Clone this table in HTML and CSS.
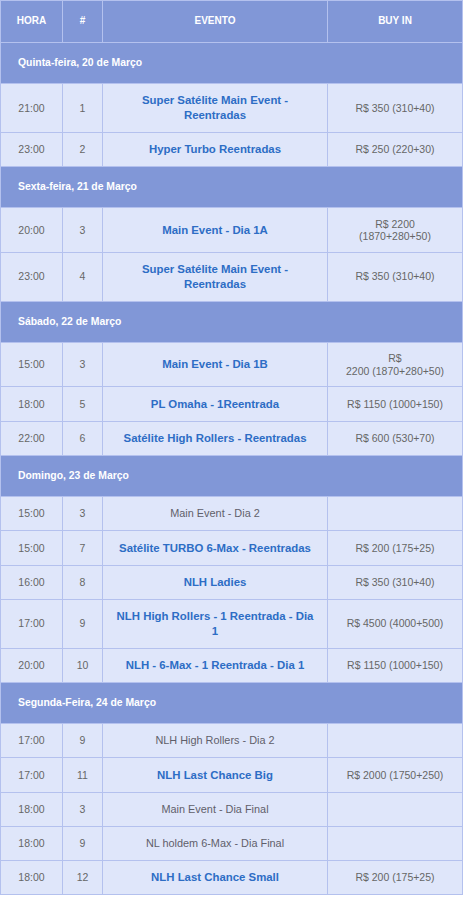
FILE: index.html
```html
<!DOCTYPE html>
<html lang="pt-BR">
<head>
<meta charset="utf-8">
<title>Programação</title>
<link rel="stylesheet" href="styles.css">
</head>
<body>
<table class="schedule">
  <colgroup>
    <col class="c-time"><col class="c-num"><col class="c-event"><col class="c-buy">
  </colgroup>
  <thead>
    <tr class="head"><th>HORA</th><th>#</th><th>EVENTO</th><th>BUY IN</th></tr>
  </thead>
  <tbody>
    <tr class="day"><td colspan="4">Quinta-feira, 20 de Março</td></tr>
    <tr><td>21:00</td><td>1</td><td class="ev">Super Satélite Main Event - Reentradas</td><td>R$ 350 (310+40)</td></tr>
    <tr><td>23:00</td><td>2</td><td class="ev">Hyper Turbo Reentradas</td><td>R$ 250 (220+30)</td></tr>

    <tr class="day"><td colspan="4">Sexta-feira, 21 de Março</td></tr>
    <tr><td>20:00</td><td>3</td><td class="ev">Main Event - Dia 1A</td><td class="two">R$ 2200<br>(1870+280+50)</td></tr>
    <tr><td>23:00</td><td>4</td><td class="ev">Super Satélite Main Event - Reentradas</td><td>R$ 350 (310+40)</td></tr>

    <tr class="day"><td colspan="4">Sábado, 22 de Março</td></tr>
    <tr><td>15:00</td><td>3</td><td class="ev">Main Event - Dia 1B</td><td class="two">R$<br>2200 (1870+280+50)</td></tr>
    <tr><td>18:00</td><td>5</td><td class="ev">PL Omaha - 1Reentrada</td><td>R$ 1150 (1000+150)</td></tr>
    <tr><td>22:00</td><td>6</td><td class="ev">Satélite High Rollers - Reentradas</td><td>R$ 600 (530+70)</td></tr>

    <tr class="day"><td colspan="4">Domingo, 23 de Março</td></tr>
    <tr><td>15:00</td><td>3</td><td class="ev plain">Main Event - Dia 2</td><td></td></tr>
    <tr><td>15:00</td><td>7</td><td class="ev">Satélite TURBO 6-Max - Reentradas</td><td>R$ 200 (175+25)</td></tr>
    <tr><td>16:00</td><td>8</td><td class="ev">NLH Ladies</td><td>R$ 350 (310+40)</td></tr>
    <tr><td>17:00</td><td>9</td><td class="ev">NLH High Rollers - 1 Reentrada - Dia 1</td><td>R$ 4500 (4000+500)</td></tr>
    <tr><td>20:00</td><td>10</td><td class="ev">NLH - 6-Max - 1 Reentrada - Dia 1</td><td>R$ 1150 (1000+150)</td></tr>

    <tr class="day"><td colspan="4">Segunda-Feira, 24 de Março</td></tr>
    <tr><td>17:00</td><td>9</td><td class="ev plain">NLH High Rollers - Dia 2</td><td></td></tr>
    <tr><td>17:00</td><td>11</td><td class="ev">NLH Last Chance Big</td><td>R$ 2000 (1750+250)</td></tr>
    <tr><td>18:00</td><td>3</td><td class="ev plain">Main Event - Dia Final</td><td></td></tr>
    <tr><td>18:00</td><td>9</td><td class="ev plain">NL holdem 6-Max - Dia Final</td><td></td></tr>
    <tr><td>18:00</td><td>12</td><td class="ev">NLH Last Chance Small</td><td>R$ 200 (175+25)</td></tr>
  </tbody>
</table>
</body>
</html>
```

FILE: styles.css
```css
html, body {
  margin: 0;
  padding: 0;
  background: #ffffff;
}

.schedule {
  width: 462px;
  border-collapse: collapse;
  table-layout: fixed;
  font-family: "Liberation Sans", Arial, sans-serif;
  font-size: 10.5px;
  color: #666666;
  background: #dfe6fa;
}

.c-time { width: 62px; }
.c-num { width: 40px; }
.c-event { width: 225px; }
.c-buy { width: 135px; }

.schedule th,
.schedule td {
  border: 1px solid #b4c1ee;
  text-align: center;
  vertical-align: middle;
  padding: 9.35px 8px;
  line-height: 14.6px;
}

.head th {
  background: #8197d7;
  color: #ffffff;
  font-weight: bold;
  font-size: 10px;
  padding: 13px 4px 14px;
  line-height: 14px;
}

.day td {
  background: #8197d7;
  color: #ffffff;
  font-weight: bold;
  text-align: left;
  font-size: 10.4px;
  padding: 13px 17px;
  line-height: 14px;
}

.schedule td.ev {
  color: #2d6dc5;
  font-weight: bold;
  font-size: 11.4px;
  padding: 9.35px 12px;
}

.schedule td.ev.plain {
  font-size: 10.9px;
  font-weight: normal;
  color: #5f5f6a;
}

.schedule td.two {
  line-height: 12.5px;
}
```
